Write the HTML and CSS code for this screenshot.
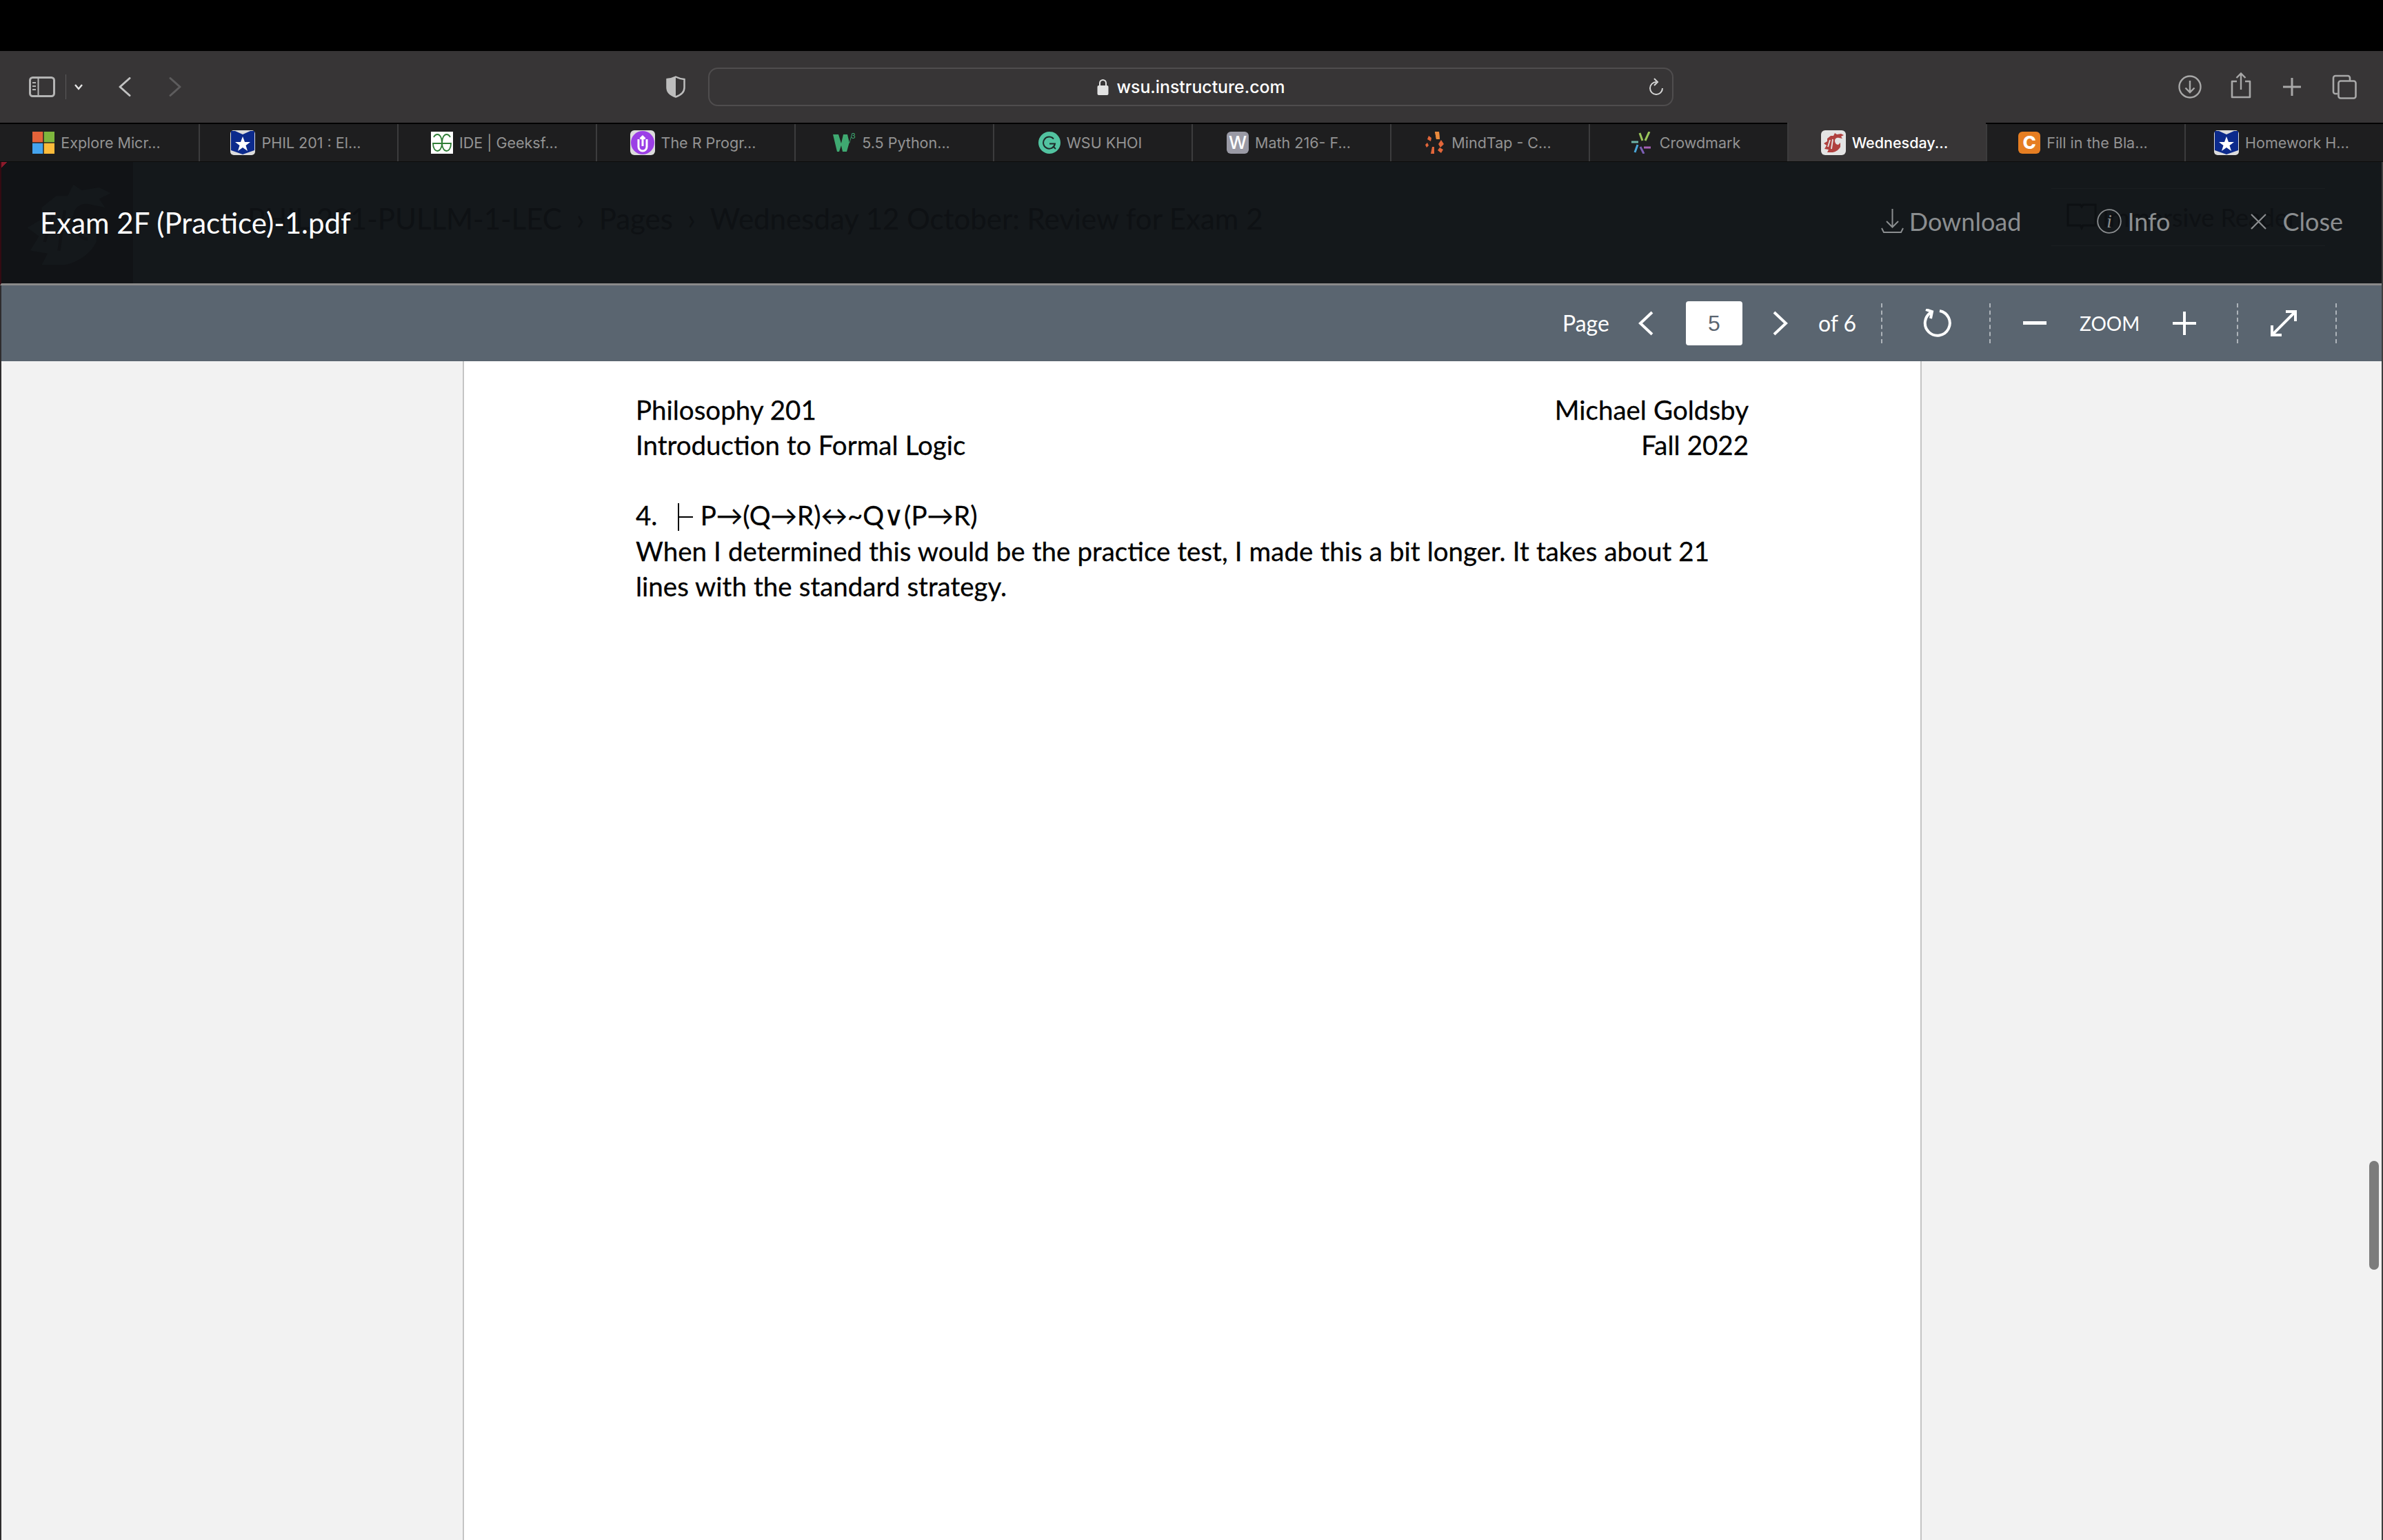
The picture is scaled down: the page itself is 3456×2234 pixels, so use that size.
FILE: index.html
```html
<!DOCTYPE html>
<html lang="en">
<head>
<meta charset="utf-8">
<title>Exam 2F (Practice)-1.pdf</title>
<link rel="stylesheet" href="styles.css">
</head>
<body>
<div class="app">
  <div class="topblack"></div>
  <div class="toolbar">
    <svg class="ic sidebar" width="38" height="30" viewBox="0 0 38 30"><rect x="1.500" y="1.500" width="35" height="27" rx="4" fill="none" stroke="#b4b4b4" stroke-width="3"/><path d="M13.500 2v26" stroke="#b4b4b4" stroke-width="2"/><path d="M5 9h5M5 14h5M5 19h5" stroke="#b4b4b4" stroke-width="2"/></svg>
    <span class="vsep"></span>
    <svg class="ic chev-small" width="14" height="10" viewBox="0 0 14 10"><path d="M2 2l5 6 5-6" fill="none" stroke="#e6e6e6" stroke-width="2.400"/></svg>
    <svg class="ic nav-back" width="18" height="28" viewBox="0 0 18 28"><path d="M16 1.500L2 14l14 12.500" fill="none" stroke="#c2c2c2" stroke-width="3" stroke-linecap="round" stroke-linejoin="round"/></svg>
    <svg class="ic nav-fwd" width="18" height="28" viewBox="0 0 18 28"><path d="M2 1.500L16 14 2 26.500" fill="none" stroke="#5d5c5d" stroke-width="3" stroke-linecap="round" stroke-linejoin="round"/></svg>
    <svg class="ic shield" width="28" height="32" viewBox="0 0 28 32"><path d="M14 1.500C10 3.500 6 4.500 1.500 5v12c0 6 5 11 12.500 13.500C21.500 28 26.500 23 26.500 17V5C22 4.500 18 3.500 14 1.500z" fill="#373536" stroke="#bdbdbd" stroke-width="2.500"/><path d="M14 1.500C10 3.500 6 4.500 1.500 5v12c0 6 5 11 12.500 13.500z" fill="#bdbdbd"/></svg>
    <div class="urlbar">
      <span class="urlspacer"></span>
      <svg class="lock" width="17" height="24" viewBox="0 0 17 24"><path d="M4 11V6.500a4.500 4.500 0 0 1 9 0V11" fill="none" stroke="#e2e2e2" stroke-width="2"/><rect x="0.500" y="10" width="16" height="14" rx="2" fill="#e2e2e2"/></svg>
      <span class="urltext">wsu.instructure.com</span>
      <span class="urlspacer"></span>
      <svg class="reload" width="22" height="26" viewBox="0 0 22 26"><path d="M20 15A9 9 0 1 1 11 6" fill="none" stroke="#d6d6d6" stroke-width="2"/><path d="M8 1l5 5-5 5" fill="none" stroke="#d6d6d6" stroke-width="2"/></svg>
    </div>
    <svg class="ic dl" width="34" height="34" viewBox="0 0 34 34"><circle cx="17" cy="17" r="15.500" fill="none" stroke="#a8a8a8" stroke-width="2.400"/><path d="M17 8v17M10.500 18.500l6.500 6.500 6.500-6.500" fill="none" stroke="#a8a8a8" stroke-width="2.400"/></svg>
    <svg class="ic share" width="30" height="38" viewBox="0 0 30 38"><path d="M9 13H2v23h26V13h-7" fill="none" stroke="#a8a8a8" stroke-width="2.600" stroke-linejoin="round"/><path d="M15 25V2M8.500 8L15 1.500 21.500 8" fill="none" stroke="#a8a8a8" stroke-width="2.400"/></svg>
    <svg class="ic plus" width="28" height="28" viewBox="0 0 28 28"><path d="M14 1v26M1 14h26" stroke="#a8a8a8" stroke-width="3"/></svg>
    <svg class="ic tabsic" width="36" height="36" viewBox="0 0 36 36"><path d="M8 28H5a3 3 0 0 1-3-3V5a3 3 0 0 1 3-3h18a3 3 0 0 1 3 3v4" fill="none" stroke="#a8a8a8" stroke-width="2.600"/><rect x="9.500" y="9.500" width="25" height="25" rx="3" fill="#373536" stroke="#a8a8a8" stroke-width="2.600"/></svg>
  </div>
  <div class="tabbar">
    <div class="tab"><svg class="fav" width="32" height="32" viewBox="0 0 32 32"><rect width="15.300" height="15.300" fill="#e4633a"/><rect x="16.700" width="15.300" height="15.300" fill="#7eb63d"/><rect y="16.700" width="15.300" height="15.300" fill="#45a4ee"/><rect x="16.700" y="16.700" width="15.300" height="15.300" fill="#fbbb3b"/></svg><span class="tabtext">Explore Micr...</span></div>
    <div class="tab"><svg class="fav" width="36" height="36" viewBox="0 0 36 36"><rect width="36" height="36" rx="5" fill="#dcdcdc"/><path d="M1 1h6l11 5 11-5h6v28l-17 6-17-6z" fill="#0c2a8c"/><path d="M18 9l3 8h8l-6.500 5 2.500 8-7-5-7 5 2.500-8L7 17h8z" fill="#fff"/></svg><span class="tabtext">PHIL 201 : El...</span></div>
    <div class="tab"><svg class="fav" width="32" height="32" viewBox="0 0 32 32"><rect width="32" height="32" fill="#fff"/><path d="M16 17H29C29 24 26 28 22.500 28S16 23 16 16 19 4 22.500 4c2.500 0 4.500 2 5.500 4M16 17H3C3 24 6 28 9.500 28S16 23 16 16 13 4 9.500 4C7 4 5 6 4 8" fill="none" stroke="#2f7d36" stroke-width="1.800"/></svg><span class="tabtext">IDE | Geeksf...</span></div>
    <div class="tab"><svg class="fav" width="36" height="36" viewBox="0 0 36 36"><rect width="36" height="36" rx="6" fill="#dcdcdc"/><circle cx="18" cy="18" r="17" fill="#9b3fe6"/><path d="M12 13v11a6 6 0 0 0 12 0V13M18 9v14M14.500 12.500L18 9l3.500 3.500" fill="none" stroke="#fff" stroke-width="3"/></svg><span class="tabtext">The R Progr...</span></div>
    <div class="tab"><svg class="fav" width="33" height="32" viewBox="0 0 33 32"><path d="M0 4h8l4 13 3-13h6l3 13 4-13h-1l-7 25h-6L12 20l-3 9H6z" fill="#3fa971"/><text class="w3" x="26" y="10">3</text></svg><span class="tabtext">5.5 Python...</span></div>
    <div class="tab"><svg class="fav" width="32" height="32" viewBox="0 0 32 32"><circle cx="16" cy="16" r="16" fill="#52c3a0"/><path d="M22 10.500a8.500 8.500 0 1 0 2 7h-8" fill="none" stroke="#1f2b2a" stroke-width="2"/><path d="M22 22l3 3" stroke="#1f2b2a" stroke-width="2"/></svg><span class="tabtext">WSU KHOI</span></div>
    <div class="tab"><span class="fav letter grey">W</span><span class="tabtext">Math 216- F...</span></div>
    <div class="tab"><svg class="fav" width="32" height="32" viewBox="0 0 32 32"><path d="M17 0h6l1 11h-5zM8 6l4 3-1 5-5-3zM26 12l4 6-5 5-3-5zM3 19l3-3 2 4-3 3zM24 23l5 3-3 5-5-4zM13 22l3 0 0 10-5 0z" fill="#e2663a"/><path d="M17 0h6l1 11h-5z" fill="#e98b3d"/></svg><span class="tabtext">MindTap - C...</span></div>
    <div class="tab"><svg class="fav" width="32" height="32" viewBox="0 0 32 32"><path d="M12 2l4 11M26 0l-6 13" stroke="#9ac65a" stroke-width="3"/><path d="M0 15h10" stroke="#6fb5a8" stroke-width="3"/><path d="M9 19L5 30" stroke="#4aa6d8" stroke-width="3"/><path d="M13 22l5 10" stroke="#7d5fb5" stroke-width="3"/><path d="M18 23h10" stroke="#a560b5" stroke-width="3"/></svg><span class="tabtext">Crowdmark</span></div>
    <div class="tab active"><svg class="fav" width="36" height="36" viewBox="0 0 36 36"><rect width="36" height="36" rx="6" fill="#e4e4e4"/><path d="M20 4l3 2 6-1 4 2-4 2 2 3-5-1c-3-1-6 1-6 4 0 3 2 6 5 6l3-3v6c-2 4-6 7-11 8H9l2-4-6-1 3-5-4-3 5-3v-4l5-4h4z" fill="#b0413f"/><path d="M13 14l-3 10M17 13l-2 14" stroke="#e4e4e4" stroke-width="1.800" fill="none"/></svg><span class="tabtext">Wednesday...</span></div>
    <div class="tab"><span class="fav letter orange">C</span><span class="tabtext">Fill in the Bla...</span></div>
    <div class="tab"><svg class="fav" width="36" height="36" viewBox="0 0 36 36"><rect width="36" height="36" rx="5" fill="#dcdcdc"/><path d="M1 1h6l11 5 11-5h6v28l-17 6-17-6z" fill="#0c2a8c"/><path d="M18 9l3 8h8l-6.500 5 2.500 8-7-5-7 5 2.500-8L7 17h8z" fill="#fff"/></svg><span class="tabtext">Homework H...</span></div>
  </div>
  <div class="tabline"></div>
  <div class="viewer">
    <header class="viewhead">
      <div class="ghostlogo"><svg width="150" height="150" viewBox="0 0 36 36"><path d="M20 4l3 2 6-1 4 2-4 2 2 3-5-1c-3-1-6 1-6 4 0 3 2 6 5 6l3-3v6c-2 4-6 7-11 8H9l2-4-6-1 3-5-4-3 5-3v-4l5-4h4z" fill="#14181b"/><path d="M13 14l-3 10M17 13l-2 14M20 15c0 4 2 8 5 8" stroke="#111316" stroke-width="1" fill="none"/></svg></div>
      <div class="ghostcrumb"><span>PHIL 201-PULLM-1-LEC</span><span>&#8250;</span><span>Pages</span><span>&#8250;</span><span>Wednesday 12 October: Review for Exam 2</span></div>
      <div class="ghostreader"><svg width="44" height="44" viewBox="0 0 44 44"><path d="M2 4h18l2 3 2-3h18v30H24l-2 4-2-4H2z" fill="none" stroke="#0d1013" stroke-width="3"/></svg><span>Immersive Reader</span></div>
      <h1 class="filename">Exam 2F (Practice)-1.pdf</h1>
      <div class="actions">
        <span class="action act-dl"><svg width="33" height="36" viewBox="0 0 33 36"><path d="M16.500 0v26M8 18l8.500 8.500L25 18" fill="none" stroke="#8b8e90" stroke-width="2"/><path d="M1 28l3 6h25l3-6" fill="none" stroke="#8b8e90" stroke-width="2"/></svg>Download</span>
        <span class="action act-info"><svg width="36" height="36" viewBox="0 0 36 36"><circle cx="18" cy="18" r="16.800" fill="none" stroke="#8b8e90" stroke-width="1.800"/><text class="itext" x="18" y="27">i</text></svg>Info</span>
        <span class="action act-close"><svg width="25" height="25" viewBox="0 0 25 25"><path d="M2 2l21 21M23 2L2 23" stroke="#8b8e90" stroke-width="2.200"/></svg>Close</span>
      </div>
    </header>
    <nav class="pdfbar">
      <span class="lbl lbl-page">Page</span>
      <svg class="pb-prev" width="22" height="36" viewBox="0 0 22 36"><path d="M20 2L3 18l17 16" fill="none" stroke="#fff" stroke-width="4"/></svg>
      <span class="pageinput">5</span>
      <svg class="pb-next" width="22" height="36" viewBox="0 0 22 36"><path d="M2 2l17 16L2 34" fill="none" stroke="#fff" stroke-width="4"/></svg>
      <span class="lbl lbl-of">of 6</span>
      <span class="dash d1"></span>
      <svg class="pb-rot" width="42" height="42" viewBox="0 0 42 42"><path d="M13 5A18 18 0 1 0 25 3" fill="none" stroke="#fff" stroke-width="4"/><path d="M5 1l9 3-2 10" fill="none" stroke="#fff" stroke-width="4"/></svg>
      <span class="dash d2"></span>
      <svg class="pb-minus" width="34" height="6" viewBox="0 0 34 6"><rect width="34" height="5" fill="#fff"/></svg>
      <span class="lbl lbl-zoom">ZOOM</span>
      <svg class="pb-plus" width="34" height="34" viewBox="0 0 34 34"><path d="M17 0v34M0 17h34" stroke="#fff" stroke-width="4"/></svg>
      <span class="dash d3"></span>
      <svg class="pb-exp" width="40" height="40" viewBox="0 0 40 40"><path d="M4 36L36 4M23 3h14v14M3 23v14h14" fill="none" stroke="#fff" stroke-width="4"/></svg>
      <span class="dash d4"></span>
    </nav>
    <main class="docarea">
      <section class="page">
        <div class="row"><span>Philosophy 201</span><span>Michael Goldsby</span></div>
        <div class="row para"><span>Introduction to Formal Logic</span><span>Fall 2022</span></div>
        <p class="line">4.&nbsp; <span class="turn"></span>P&#8594;(Q&#8594;R)&#8596;~Q<span class="vee">&#8744;</span>(P&#8594;R)</p>
        <p class="line">When I determined this would be the practice test, I made this a bit longer. It takes about 21</p>
        <p class="line">lines with the standard strategy.</p>
      </section>
      <div class="scrollthumb"></div>
    </main>
  </div>
</div>
</body>
</html>
```
FILE: styles.css
```css
* { box-sizing: border-box; }
html, body { margin: 0; padding: 0; }
body { width: 3456px; height: 2234px; overflow: hidden; background: #000; font-family: Inter, "Liberation Sans", sans-serif; }
.app { width: 3456px; height: 2234px; display: flex; flex-direction: column; }
.topblack { height: 74px; background: #000; flex: none; }

.toolbar { height: 104px; flex: none; background: #373536; display: flex; align-items: center; padding-left: 42px; }
.ic { flex: none; display: block; }
.vsep { width: 1px; height: 36px; background: #5b5a5b; margin-left: 15px; flex: none; }
.chev-small { margin-left: 11px; }
.nav-back { margin-left: 51px; }
.nav-fwd { margin-left: 55px; }
.shield { margin-left: 703px; }
.urlbar { width: 1400px; height: 56px; margin-left: 33px; border: 2px solid #4f4d4e; border-radius: 14px; display: flex; align-items: center; padding: 0 12px 0 34px; flex: none; }
.urlspacer { flex: 1; }
.lock { margin-right: 12px; flex: none; }
.urltext { color: #fff; font-size: 24.800px; font-weight: 500; line-height: 30px; }
.reload { flex: none; }
.dl { margin-left: 732px; }
.share { margin-left: 42px; margin-top: -4px; }
.plus { margin-left: 45px; }
.tabsic { margin-left: 44px; }

.tabbar { height: 56px; flex: none; background: #1e1e1f; border-top: 2px solid #000; display: grid; grid-template-columns: repeat(12, 288px); }
.tab { display: flex; align-items: center; justify-content: center; gap: 9px; border-left: 2px solid #3c3c3d; padding-right: 8px; color: #939393; font-size: 21.500px; white-space: nowrap; }
.tab:first-child { border-left: 0; }
.tab.active { background: #373536; color: #fff; font-weight: 500; margin-top: -2px; padding-top: 2px; }
.fav { flex: none; display: block; }
.letter { width: 32px; height: 32px; border-radius: 6px; color: #fff; display: flex; align-items: center; justify-content: center; font-size: 26px; font-weight: 700; line-height: 1; }
.grey { background: #9a9aa5; font-weight: 500; }
.orange { background: #e67e22; font-weight: 800; }
.w3 { font-size: 11px; fill: #3fa971; font-family: Inter, sans-serif; }
.tabtext { display: block; }
.tabline { height: 1px; flex: none; background: #0c0c0c; }

.viewer { flex: 1; display: flex; flex-direction: column; border-right: 2px solid #3e3e3e; min-height: 0; }
.viewhead { height: 179px; flex: none; background: #14181b; border-bottom: 3px solid #8a8a8a; border-left: 2px solid #340a12; display: flex; align-items: center; justify-content: space-between; position: relative; padding-left: 56px; }
.ghostlogo { position: absolute; left: 0; top: 0; width: 191px; height: 176px; background: linear-gradient(135deg, #8b1a2b 0 6px, transparent 6px), #111316; display: flex; align-items: center; justify-content: center; padding-top: 6px; }
.ghostcrumb { position: absolute; left: 357px; top: 57px; display: flex; gap: 21px; font-family: Lato, sans-serif; font-size: 42px; line-height: 50px; color: #0e1114; white-space: nowrap; }
.ghostreader { position: absolute; left: 2973px; top: 38px; width: 397px; height: 84px; border: 1px solid #1a1e21; border-width: 1px 0; display: flex; align-items: center; gap: 8px; padding-left: 22px; font-family: Lato, sans-serif; font-size: 36px; color: #0e1114; white-space: nowrap; }
.filename { position: relative; margin: 0; font-family: Lato, sans-serif; font-weight: 400; font-size: 42px; color: #fff; line-height: 50px; white-space: nowrap; }
.actions { position: relative; display: flex; align-items: center; color: #8b8e90; font-family: Lato, sans-serif; font-size: 36px; height: 50px; margin-top: -4px; padding-right: 56px; }
.action { display: flex; align-items: center; gap: 8px; }
.action svg { flex: none; }
.act-info { margin-left: 110px; }
.act-close { margin-left: 116px; gap: 22px; }
.itext { font-family: "Liberation Serif", serif; font-style: italic; font-size: 27px; fill: #8b8e90; text-anchor: middle; }

.pdfbar { height: 110px; flex: none; background: #5a6570; border-left: 2px solid #2e2c2d; display: flex; align-items: center; padding-left: 2264px; color: #fff; font-family: Lato, sans-serif; }
.pdfbar svg { flex: none; display: block; }
.lbl { font-size: 32px; line-height: 40px; white-space: nowrap; }
.pb-prev { margin-left: 42px; }
.pageinput { width: 82px; height: 64px; margin-left: 47px; border-radius: 4px; background: #fff; color: #5a6570; font-family: "Liberation Sans", sans-serif; font-size: 32px; display: flex; align-items: center; justify-content: center; flex: none; }
.pb-next { margin-left: 44px; }
.lbl-of { margin-left: 44px; }
.dash { width: 0; height: 58px; border-left: 2px dashed #aeb4ba; flex: none; }
.d1 { margin-left: 36px; }
.pb-rot { margin-left: 58px; }
.d2 { margin-left: 55px; }
.pb-minus { margin-left: 47px; }
.lbl-zoom { margin-left: 48px; font-size: 28px; }
.pb-plus { margin-left: 48px; }
.d3 { margin-left: 59px; }
.pb-exp { margin-left: 46px; }
.d4 { margin-left: 55px; }

.docarea { flex: 1; min-height: 0; background: #f2f2f2; border-left: 2px solid #2e2c2d; display: flex; justify-content: center; position: relative; padding-left: 2px; }
.page { width: 2116px; background: #fff; border-left: 2px solid #c4c4c4; border-right: 2px solid #c4c4c4; padding: 45px 249px 0; color: #000; font-family: Lato, sans-serif; font-size: 38.500px; line-height: 51px; word-spacing: 0.250px; -webkit-text-stroke: 0.3px #000; }
.row { display: flex; justify-content: space-between; }
.para { margin-bottom: 51px; }
.line { margin: 0; white-space: nowrap; }
.turn { display: inline-block; width: 22px; height: 40px; vertical-align: -8px; margin: 0 11px 0 9px; border-left: 2px solid #000; background: linear-gradient(#000, #000) left center / 22px 2px no-repeat; }
.vee { font-family: "Liberation Sans", sans-serif; }
.scrollthumb { position: absolute; right: 4px; top: 1160px; width: 14px; height: 158px; border-radius: 7px; background: #7c7c7c; }
```
